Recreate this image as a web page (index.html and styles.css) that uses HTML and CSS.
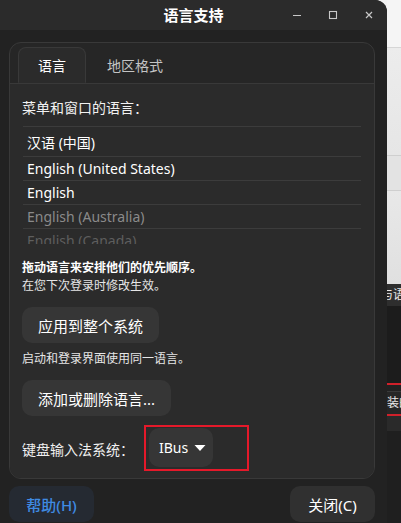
FILE: index.html
```html
<!DOCTYPE html>
<html lang="zh-CN">
<head>
<meta charset="utf-8">
<title>语言支持</title>
<link rel="stylesheet" href="styles.css">
</head>
<body>
<div class="screen">
  <div class="window">
    <header class="titlebar">
      <div class="tb-side"></div>
      <div class="title">语言支持</div>
      <div class="controls">
        <span class="ctl"><svg width="10" height="10" viewBox="0 0 10 10"><path d="M1 5.5h8" stroke="#c8c8c8" stroke-width="1.2"/></svg></span>
        <span class="ctl"><svg width="10" height="10" viewBox="0 0 10 10"><rect x="1.5" y="1.5" width="7" height="7" fill="none" stroke="#c8c8c8" stroke-width="1.1"/></svg></span>
        <span class="ctl"><svg width="10" height="10" viewBox="0 0 10 10"><path d="M2 2l6 6M8 2l-6 6" stroke="#c8c8c8" stroke-width="1.2"/></svg></span>
      </div>
    </header>
    <main class="content">
      <section class="notebook">
        <div class="tabs">
          <div class="tab active">语言</div>
          <div class="tab">地区格式</div>
        </div>
        <div class="page">
          <div class="label">菜单和窗口的语言：</div>
          <div class="list">
            <div class="row first">汉语 (中国)</div>
            <div class="row">English (United States)</div>
            <div class="row">English</div>
            <div class="row dim">English (Australia)</div>
            <div class="row dimmer">English (Canada)</div>
          </div>
          <div class="note bold">拖动语言来安排他们的优先顺序。</div>
          <div class="note">在您下次登录时修改生效。</div>
          <button class="btn apply">应用到整个系统</button>
          <div class="note gap">启动和登录界面使用同一语言。</div>
          <button class="btn addrm">添加或删除语言...</button>
          <div class="kbd-row">
            <span class="kbd-label">键盘输入法系统：</span>
            <span class="dd-wrap">
              <button class="dropdown">IBus<svg width="12" height="8" viewBox="0 0 12 8"><path d="M0.5 1h11L6 7z" fill="#ffffff"/></svg></button>
              <span class="highlight"></span>
            </span>
          </div>
        </div>
      </section>
      <div class="actions">
        <button class="btn help">帮助(H)</button>
        <button class="btn close">关闭(C)</button>
      </div>
    </main>
  </div>
  <aside class="backdrop">
    <div class="bd b1"></div>
    <div class="bd b2"></div>
    <div class="bd b3"></div>
    <div class="bd b4"></div>
    <div class="bd b5"><span class="clip t1">与语</span></div>
    <div class="bd b6"></div>
    <div class="bd red"></div>
    <div class="bd b7"></div>
    <div class="bd b8"><span class="clip">装的</span></div>
    <div class="bd red"></div>
    <div class="bd b9"></div>
    <div class="bd b10"></div>
  </aside>
</div>
</body>
</html>
```
FILE: styles.css
```css
* { box-sizing: border-box; }
html, body { margin: 0; padding: 0; }
body {
  width: 401px;
  height: 523px;
  overflow: hidden;
  font-family: "Noto Sans", "Noto Sans CJK SC", sans-serif;
  font-size: 14px;
  color: #ffffff;
}
.screen {
  display: flex;
  width: 401px;
  height: 523px;
  background: #f2f2f2;
}
.window {
  width: 387px;
  height: 523px;
  flex: none;
  background: #222222;
  border-top-right-radius: 12px;
  overflow: hidden;
  display: flex;
  flex-direction: column;
}
.titlebar {
  height: 30px;
  flex: none;
  background: #2b2b2b;
  display: grid;
  grid-template-columns: 1fr auto 1fr;
  align-items: center;
}
.title {
  font-weight: bold;
  font-size: 15px;
  letter-spacing: 0;
  color: #ffffff;
  line-height: 30px;
}
.controls {
  display: flex;
  justify-content: flex-end;
}
.ctl {
  width: 36px;
  height: 30px;
  display: flex;
  align-items: center;
  justify-content: center;
}
.content {
  flex: 1;
  padding: 12px 12px 0 9px;
  display: flex;
  flex-direction: column;
}
.notebook {
  height: 437px;
  border: 1px solid #393939;
  border-radius: 12px;
  background: #262626;
  overflow: hidden;
  display: flex;
  flex-direction: column;
}
.tabs {
  display: flex;
  padding: 4px 0 0 8px;
  height: 41px;
  border-bottom: 1px solid #393939;
  flex: none;
}
.tab {
  height: 36px;
  padding: 0 20px;
  display: flex;
  align-items: center;
  color: #c4c4c4;
  font-size: 14px;
  margin-bottom: -1px;
  border: 1px solid transparent;
}
.tab.active {
  color: #ffffff;
  background: #2b2b2b;
  border-color: #393939;
  border-bottom-color: #2b2b2b;
  border-radius: 8px 8px 0 0;
  padding: 0 19px;
}
.page {
  flex: 1;
  background: #2b2b2b;
  padding: 15px 13px 0 12px;
  display: flex;
  flex-direction: column;
  align-items: flex-start;
}
.label {
  font-size: 14px;
  line-height: 18px;
  color: #f2f2f2;
}
.list {
  align-self: stretch;
  margin: 9px 0 0 1px;
  height: 118px;
  overflow: hidden;
  border-top: 1px solid #3c3c3c;
}
.row {
  height: 24px;
  border-bottom: 1px solid #3c3c3c;
  padding-left: 4px;
  display: flex;
  align-items: center;
  font-size: 14px;
  color: #ffffff;
}
.row.first { height: 30px; }
.row.dim { color: #8a8a8a; }
.row.dimmer { color: #5e5e5e; }
.note {
  font-size: 12px;
  line-height: 18px;
  color: #e6e6e6;
}
.note.bold {
  font-weight: bold;
  color: #ffffff;
  margin-top: 15px;
}
.note.gap { margin-top: 7px; }
.btn {
  font-family: inherit;
  border: none;
  border-radius: 10px;
  background: #363636;
  color: #ffffff;
  font-size: 15px;
  height: 36px;
  padding: 0 16px;
  cursor: default;
}
.apply { margin-top: 12px; }
.addrm { margin-top: 12px; }
.kbd-row {
  margin-top: 12px;
  display: flex;
  align-items: center;
  gap: 15px;
}
.kbd-label {
  font-size: 14px;
  color: #f0f0f0;
  padding-top: 2px;
}
.dd-wrap { position: relative; display: inline-flex; }
.dropdown {
  font-family: inherit;
  height: 39px;
  width: 64px;
  border: none;
  border-radius: 10px;
  background: #363636;
  color: #ffffff;
  font-size: 14px;
  display: flex;
  align-items: center;
  gap: 6px;
  padding: 0 0 0 10px;
}
.highlight {
  position: absolute;
  left: -5px;
  top: -3px;
  width: 105px;
  height: 46px;
  border: 2px solid #e5192a;
}
.actions {
  display: flex;
  justify-content: space-between;
  margin-top: 7px;
}
.help {
  width: 85px;
  background: #252a32;
  color: #3f8be3;
  font-weight: 500;
}
.close {
  width: 85px;
  background: #303030;
}
.backdrop {
  width: 14px;
  flex: none;
  display: flex;
  flex-direction: column;
  overflow: hidden;
}
.bd { flex: none; overflow: hidden; white-space: nowrap; }
.b1 { height: 48px; background: #f5f5f5; border-bottom: 1px solid #d6d6d6; }
.b2 { height: 108px; background: linear-gradient(#ececec, #e6e6e6); border-bottom: 1px solid #cfcfcf; }
.b3 { height: 35px; background: #e3e3e3; border-bottom: 1px solid #cfcfcf; }
.b4 { height: 93px; background: linear-gradient(#e8e8e8, #e0e0e0); }
.b5 { height: 22px; background: #2e2e2e; font-size: 12px; line-height: 22px; color: #e8e8e8; }
.t1 { display: block; text-indent: -6px; }
.b6 { height: 77px; background: #1c1c1c; }
.red { height: 2px; background: #d0202a; }
.b7 { height: 7px; background: #222222; border-bottom: 1px solid #3a3a3a; }
.b8 { height: 22px; background: #262626; font-size: 12px; line-height: 22px; color: #e8e8e8; }
.b9 { height: 15px; background: #2a2a2a; }
.b10 { height: 100px; background: #1f1f1f; }
.clip { display: block; }
```
